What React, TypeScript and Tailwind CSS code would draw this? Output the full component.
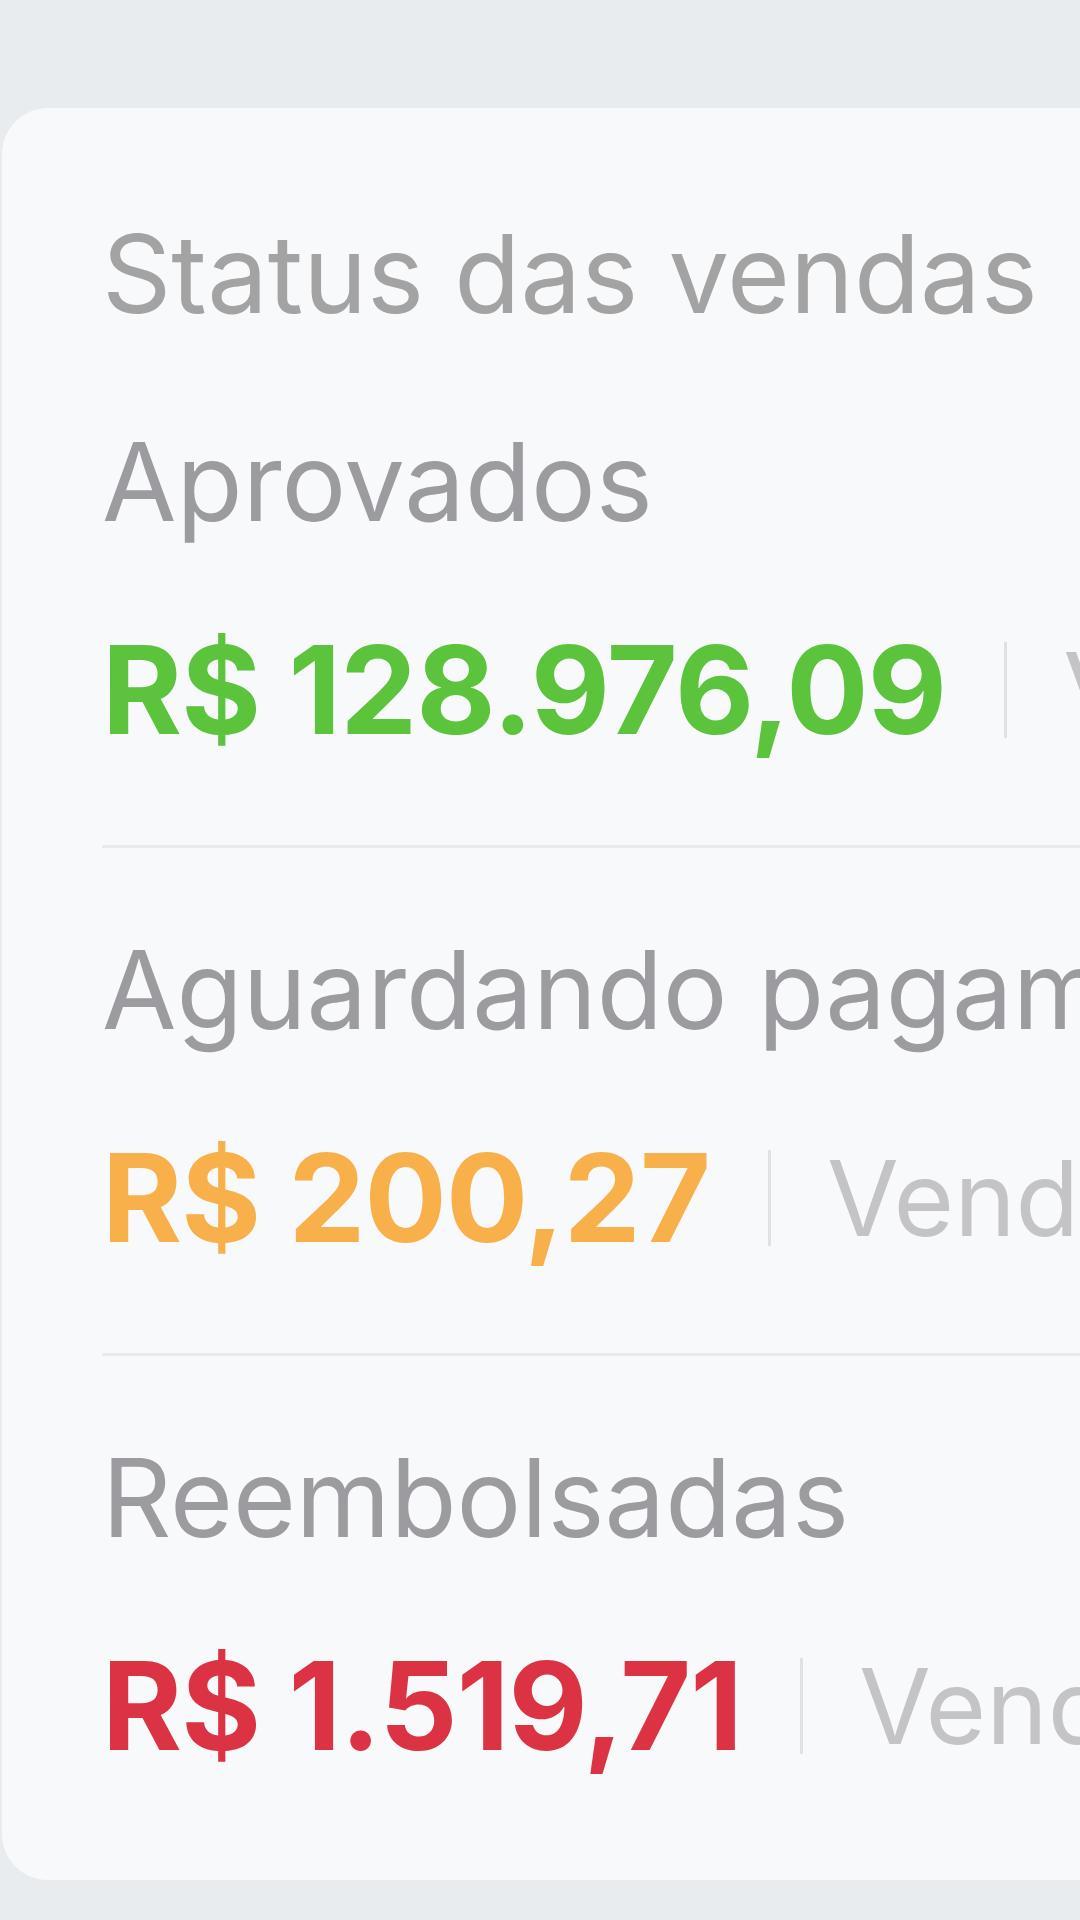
import React from 'react';

type Row = {
  label: string;
  amount: string;
  color: string;
  note: string;
};

const rows: Row[] = [
  { label: 'Aprovados', amount: 'R$ 128.976,09', color: 'text-[#5bc43c]', note: 'Vendas aprovadas' },
  { label: 'Aguardando pagamento', amount: 'R$ 200,27', color: 'text-[#f8b04b]', note: 'Vendas pendentes' },
  { label: 'Reembolsadas', amount: 'R$ 1.519,71', color: 'text-[#dc3344]', note: 'Vendas reembolsadas' },
];

function StatusRow({ row, last }: { row: Row; last: boolean }) {
  return (
    <div className={last ? '' : 'border-b-[3px] border-[#e8eaed] pb-[94px] mb-[88px]'}>
      <p className="text-[108px] leading-none text-[#9c9ca0] whitespace-nowrap">{row.label}</p>
      <div className="mt-[93px] flex items-center whitespace-nowrap">
        <span className={`text-[122px] leading-none font-bold tracking-[-0.8px] ${row.color}`}>{row.amount}</span>
        <span className="ml-[58px] mr-[56px] h-[96px] w-[3px] shrink-0 bg-[#dfe1e5]" />
        <span className="text-[104px] leading-none text-[#c4c4c6]">{row.note}</span>
      </div>
    </div>
  );
}

export default function App() {
  return (
    <div
      className="w-[1080px] h-[1920px] overflow-hidden bg-[#e9ecef] pt-[108px]"
      style={{ fontFamily: 'Inter, "Noto Sans", sans-serif' }}
    >
      <div className="ml-[2px] w-[1200px] h-[1772px] rounded-[46px] bg-[#f8f9fb] pl-[100px] pt-[112px]">
        <h2 className="text-[108px] leading-none font-normal text-[#a3a3a3] whitespace-nowrap">Status das vendas</h2>
        <div className="mt-[100px]">
          {rows.map((row, i) => (
            <StatusRow key={row.label} row={row} last={i === rows.length - 1} />
          ))}
        </div>
      </div>
    </div>
  );
}
